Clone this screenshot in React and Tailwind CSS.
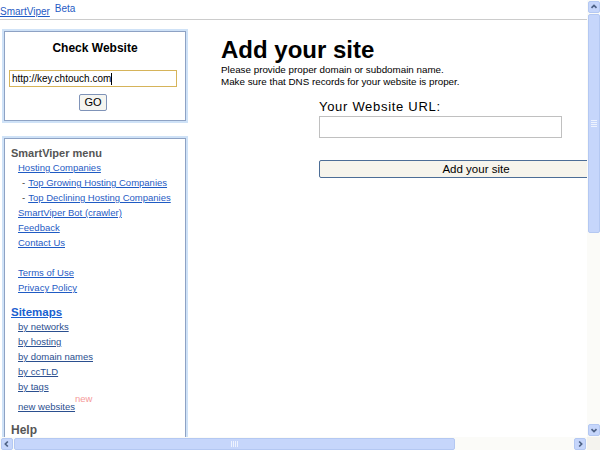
import React from 'react';

const font = { fontFamily: '"Liberation Sans", Arial, sans-serif' };

const MenuLink = ({ children, dash, dark }) => (
  <div className="leading-[15px] h-[15px] flex whitespace-nowrap text-[9.5px]">
    {dash && <span className="text-[#333] ml-[4px] mr-[3px] shrink-0">-</span>}
    <a href="#" className={`underline shrink-0 ${dark ? 'text-[#2b4f8f]' : 'text-[#1f5bc4]'}`}>{children}</a>
  </div>
);

const Box = ({ className, children }) => (
  <div className={`border-[2px] border-[#cfe2f7] ${className}`}>
    <div className="border border-[#8ea2c4] h-full bg-white">{children}</div>
  </div>
);

const Arrow = ({ dir }) => {
  const d = {
    up: 'M3 7 L6 4 L9 7',
    down: 'M3 5 L6 8 L9 5',
    left: 'M7 3 L4 6 L7 9',
    right: 'M5 3 L8 6 L5 9',
  }[dir];
  return (
    <div className="w-[12px] h-[12px] shrink-0 bg-[#c6d6fb] border border-[#b4c8f2] rounded-[2px] flex items-center justify-center">
      <svg width="12" height="12" viewBox="0 0 12 12">
        <path d={d} fill="none" stroke="#4d6185" strokeWidth="2" />
      </svg>
    </div>
  );
};

export default function App() {
  return (
    <div className="w-[600px] h-[450px] flex flex-col overflow-hidden bg-white text-[11px] text-black" style={font}>
      <div className="flex h-[437px]">
        {/* page */}
        <div className="w-[587px] h-[437px] overflow-hidden shrink-0">
          <div className="w-[700px]">
            <div className="h-[20px] border-b border-[#cccccc] w-[587px] flex items-end pb-[1px]">
              <a href="#" className="underline text-[#1f5bc4] text-[10px] leading-[12px]">SmartViper</a>
              <span className="text-[#1f5bc4] text-[10px] self-start ml-[5px] mt-[3px] leading-[12px]">Beta</span>
            </div>
            <div className="flex">
              {/* sidebar */}
              <div className="w-[186px] shrink-0 ml-[2px] pt-[9px] flex flex-col gap-[13px]">
                <Box className="h-[94px]">
                  <div className="flex flex-col pt-[9px]">
                    <div className="text-[12px] font-bold leading-[15px] text-center">Check Website</div>
                    <div className="mt-[14px] ml-[4px] w-[168px] h-[17px] border border-[#d6b45a] px-[2px] text-[10px] leading-[15px]">
                      http://key.chtouch.com<span className="inline-block w-px h-[12px] bg-black align-middle"></span>
                    </div>
                    <button className="mt-[7px] ml-[74px] w-[28px] h-[17px] border border-[#7f93b8] rounded-[2px] bg-[#f5f5f0] text-[11px] leading-[15px]">GO</button>
                  </div>
                </Box>
                <Box className="h-[320px]">
                  <div className="pl-[6px] pt-[8px]">
                    <div className="text-[11px] font-bold text-[#555555] leading-[13px]">SmartViper menu</div>
                    <div className="pl-[7px]">
                      <MenuLink>Hosting Companies</MenuLink>
                      <MenuLink dash>Top Growing Hosting Companies</MenuLink>
                      <MenuLink dash>Top Declining Hosting Companies</MenuLink>
                      <MenuLink>SmartViper Bot (crawler)</MenuLink>
                      <MenuLink>Feedback</MenuLink>
                      <MenuLink>Contact Us</MenuLink>
                      <div className="h-[15px]"></div>
                      <MenuLink>Terms of Use</MenuLink>
                      <MenuLink>Privacy Policy</MenuLink>
                    </div>
                    <div className="mt-[11px] text-[11.5px] font-bold text-[#1a5fd0] underline leading-[13px]">Sitemaps</div>
                    <div className="pl-[7px]">
                      <MenuLink dark>by networks</MenuLink>
                      <MenuLink dark>by hosting</MenuLink>
                      <MenuLink dark>by domain names</MenuLink>
                      <MenuLink dark>by ccTLD</MenuLink>
                      <MenuLink dark>by tags</MenuLink>
                      <div className="h-[19px] flex items-end whitespace-nowrap">
                        <a href="#" className="underline text-[#2b4f8f] text-[9.5px] leading-[13px]">new websites</a>
                        <span className="text-[#f59a9a] text-[9.5px] self-start leading-[10px]">new</span>
                      </div>
                    </div>
                    <div className="mt-[10px] text-[12px] font-bold text-[#555555] leading-[15px]">Help</div>
                  </div>
                </Box>
              </div>
              {/* main */}
              <div className="ml-[33px] pt-[17px] shrink-0">
                <h1 className="text-[24px] font-bold leading-[26px]">Add your site</h1>
                <div className="mt-[1px] text-[9.8px] leading-[12px]">
                  <div>Please provide proper domain or subdomain name.</div>
                  <div>Make sure that DNS records for your website is proper.</div>
                </div>
                <div className="ml-[98px] mt-[12px]">
                  <div className="text-[13px] tracking-[0.7px] leading-[14px]">Your Website URL:</div>
                  <div className="mt-[2px] w-[243px] h-[22px] border border-[#c0c0c0]"></div>
                  <button className="mt-[22px] w-[314px] h-[18px] border border-[#4c6d96] rounded-[2px] bg-[#f6f4ec] text-[11.5px] leading-[16px]">Add your site</button>
                </div>
              </div>
            </div>
          </div>
        </div>
        {/* vertical scrollbar */}
        <div className="w-[13px] h-[437px] bg-[#fbfbf8] flex flex-col items-center pt-[1px] pb-[1px]">
          <Arrow dir="up" />
          <div className="w-[12px] h-[219px] mt-[1px] bg-[#c6d6fb] border border-[#b4c8f2] rounded-[2px] flex items-center justify-center">
            <div className="w-[6px] flex flex-col gap-[1px]">
              <div className="h-px bg-[#eef3fe]"></div>
              <div className="h-px bg-[#eef3fe]"></div>
              <div className="h-px bg-[#eef3fe]"></div>
              <div className="h-px bg-[#eef3fe]"></div>
            </div>
          </div>
          <div className="flex-1"></div>
          <Arrow dir="down" />
        </div>
      </div>
      {/* horizontal scrollbar */}
      <div className="h-[13px] flex">
        <div className="w-[587px] h-[13px] bg-[#fbfbf8] flex items-center px-[1px]">
          <Arrow dir="left" />
          <div className="w-[441px] ml-[1px] h-[12px] bg-[#c6d6fb] border border-[#b4c8f2] rounded-[2px] flex items-center justify-center">
            <div className="h-[6px] flex gap-[1px]">
              <div className="w-px bg-[#eef3fe]"></div>
              <div className="w-px bg-[#eef3fe]"></div>
              <div className="w-px bg-[#eef3fe]"></div>
              <div className="w-px bg-[#eef3fe]"></div>
            </div>
          </div>
          <div className="flex-1"></div>
          <Arrow dir="right" />
        </div>
        <div className="w-[13px] h-[13px] bg-[#f4f3ee]"></div>
      </div>
    </div>
  );
}
